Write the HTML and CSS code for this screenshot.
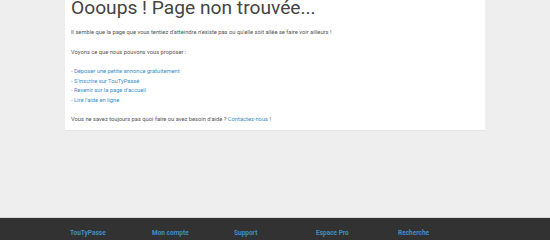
FILE: index.html
```html
<!DOCTYPE html>
<html lang="fr">
<head>
    <meta charset="UTF-8">
    <title>Page non trouvée</title>
    <link rel="stylesheet" href="styles.css">
</head>
<body>
    <div class="page">
        <div class="main">
            <div class="container">
                <h1>Oooups ! Page non trouvée...</h1>

                <p>Il semble que la page que vous tentiez d'atteindre n'existe pas ou qu'elle soit allée se faire voir ailleurs !</p>

                <p>Voyons ce que nous pouvons vous proposer :</p>

                <ul class="links">
                    <li><a href="#">- Déposer une petite annonce gratuitement</a></li>
                    <li><a href="#">- S'inscrire sur TouTyPassé</a></li>
                    <li><a href="#">- Revenir sur la page d'accueil</a></li>
                    <li><a href="#">- Lire l'aide en ligne</a></li>
                </ul>

                <p>Vous ne savez toujours pas quoi faire ou avez besoin d'aide ? <a href="#">Contactez-nous</a> !</p>
            </div>
        </div>

        <div class="footer">
            <div class="footer-inner">
                <div class="footer-col"><h4>TouTyPasse</h4></div>
                <div class="footer-col"><h4>Mon compte</h4></div>
                <div class="footer-col"><h4>Support</h4></div>
                <div class="footer-col"><h4>Espace Pro</h4></div>
                <div class="footer-col"><h4>Recherche</h4></div>
            </div>
        </div>
    </div>
</body>
</html>
```

FILE: styles.css
```css
body {
    font-family: Roboto, "Liberation Sans", sans-serif;
    background-color: #eeeeee;
    color: #555;
    margin: 0;
    overflow: hidden;
}

.page {
    display: flex;
    flex-direction: column;
    min-height: 100vh;
}

.main {
    flex-grow: 1;
}

.container {
    width: 420px;
    margin: 0 auto;
    background-color: white;
    padding: 0 6px 5px 6px;
    box-sizing: border-box;
    border-bottom: 1px solid #e4e4e4;
}

h1 {
    font-size: 19.2px;
    font-weight: 400;
    line-height: 1;
    color: #444;
    margin: -2px 0 11px 0;
}

p, .links {
    font-size: 5.75px;
    line-height: 9.7px;
    margin: 0 0 9.7px 0;
}

p:last-child {
    margin-bottom: 0;
}

.links {
    list-style: none;
    padding: 0;
}

a {
    color: #3b8fc9;
    text-decoration: none;
}

.footer {
    background-color: #323232;
    border-top: 1px solid #d6d6d6;
}

.footer-inner {
    width: 420px;
    margin: 0 auto;
    padding: 8px 5px 0 5px;
    box-sizing: border-box;
    display: grid;
    grid-template-columns: repeat(5, 1fr);
}

.footer-col h4 {
    font-size: 6.5px;
    font-weight: 700;
    line-height: 14px;
    color: #3f8fc6;
    margin: 0;
}
```
